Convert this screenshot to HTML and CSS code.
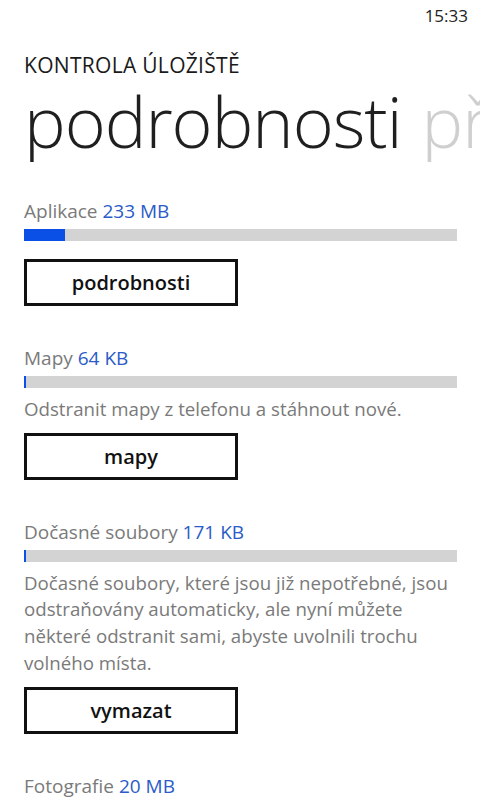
FILE: index.html
```html
<!DOCTYPE html>
<html lang="cs">
<head>
  <meta charset="UTF-8">
  <title>Kontrola úložiště</title>
  <link rel="stylesheet" href="styles.css">
</head>
<body>
<div class="status">
  <span class="time">15:33</span>
</div>

<div class="page">
  <h2 class="app-title">KONTROLA ÚLOŽIŠTĚ</h2>
  <div class="pivot">
    <h1 class="pivot-item">podrobnosti</h1>
    <span class="pivot-next">přehled</span>
  </div>

  <ul class="list">
    <li class="item">
      <p class="label">Aplikace <span class="size">233 MB</span></p>
      <div class="bar"><div class="fill" style="width: 41px"></div></div>
      <button class="btn">podrobnosti</button>
    </li>
    <li class="item">
      <p class="label">Mapy <span class="size">64 KB</span></p>
      <div class="bar"><div class="fill" style="width: 2px"></div></div>
      <p class="desc">Odstranit mapy z telefonu a stáhnout nové.</p>
      <button class="btn">mapy</button>
    </li>
    <li class="item">
      <p class="label">Dočasné soubory <span class="size">171 KB</span></p>
      <div class="bar"><div class="fill" style="width: 2px"></div></div>
      <p class="desc">Dočasné soubory, které jsou již nepotřebné, jsou odstraňovány automaticky, ale nyní můžete některé odstranit sami, abyste uvolnili trochu volného místa.</p>
      <button class="btn">vymazat</button>
    </li>
    <li class="item">
      <p class="label">Fotografie <span class="size">20 MB</span></p>
    </li>
  </ul>
</div>
</body>
</html>
```

FILE: styles.css
```css
* {
  padding: 0;
  margin: 0;
  box-sizing: border-box;
}

body {
  width: 480px;
  height: 800px;
  overflow: hidden;
  background-color: #fff;
  font-family: "Open Sans", "Noto Sans", sans-serif;
  color: #1a1a1a;
}

.status {
  display: flex;
  justify-content: flex-end;
  height: 32px;
  padding: 4px 12px 0 0;
}

.time {
  font-size: 17px;
  line-height: 24px;
  color: #222;
}

.page {
  padding-left: 24px;
}

.app-title {
  margin-top: 19px;
  font-size: 21px;
  font-weight: 500;
  line-height: 28px;
  letter-spacing: 0.3px;
  color: #1a1a1a;
}

.pivot {
  display: flex;
  gap: 20px;
  white-space: nowrap;
  overflow: hidden;
  margin-top: 1px;
}

.pivot-item,
.pivot-next {
  flex-shrink: 0;
  font-size: 70px;
  font-weight: 300;
  line-height: 82px;
  letter-spacing: -1px;
}

.pivot-item {
  color: #1f1f1f;
}

.pivot-next {
  color: #cfcfcf;
}

.list {
  list-style: none;
  margin-top: 36px;
  width: 433px;
}

.item {
  margin-bottom: 39px;
}

.item:last-child {
  margin-bottom: 0;
}

.label {
  font-size: 19px;
  line-height: 26px;
  color: #7a7a7a;
}

.size {
  color: #2a5bc8;
}

.bar {
  height: 12px;
  margin-top: 5px;
  background-color: #d3d3d3;
}

.fill {
  height: 100%;
  background-color: #0a4fe6;
}

.desc {
  margin-top: 8px;
  font-size: 18.7px;
  line-height: 26.7px;
  color: #7a7a7a;
}

.btn {
  display: block;
  width: 214px;
  height: 47px;
  margin-top: 18px;
  border: 3px solid #111;
  background-color: #fff;
  font-family: "Open Sans", "Noto Sans", sans-serif;
  font-size: 20px;
  font-weight: 600;
  color: #111;
}

.desc + .btn {
  margin-top: 10px;
}
```
